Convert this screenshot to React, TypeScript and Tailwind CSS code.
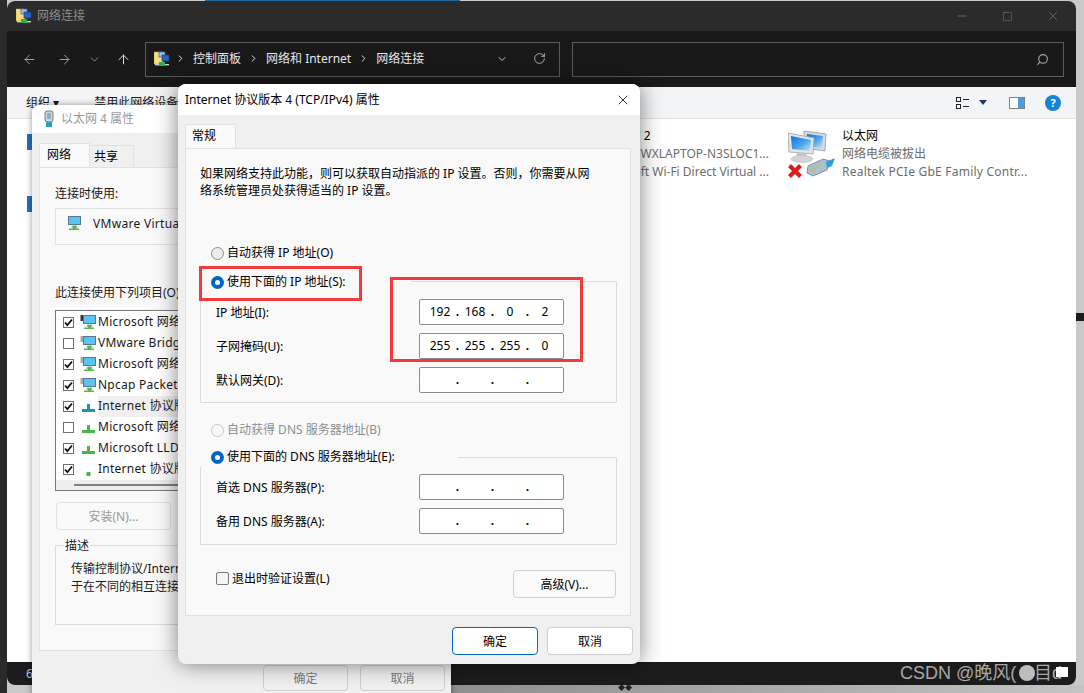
import { ArrowLeft, ArrowRight, ArrowUp, ChevronDown, ChevronRight, RotateCw, Search, Minus, Square, X } from "lucide-react";

const font = "font-['Noto_Sans','Noto_Sans_CJK_SC',sans-serif]";

const FolderNet = () => (
  <svg width="16" height="16" viewBox="0 0 16 16">
    <path d="M0 1h8l1 2v10H0z" fill="#f5dc7c" stroke="#c9a94a" strokeWidth="0.5" />
    <rect x="5" y="1" width="6" height="5" fill="#9cc3ee" stroke="#3c5f96" strokeWidth="0.7" />
    <rect x="8" y="4" width="7" height="6" fill="#2b62c0" stroke="#1f3f7c" strokeWidth="0.7" />
    <rect x="1" y="13" width="14" height="1.4" fill="#d0d0d0" />
    <rect x="5" y="11" width="6" height="4" fill="#2fae4e" />
  </svg>
);

const Monitor = ({ gear, dark }: { gear?: boolean; dark?: boolean }) => (
  <svg width="17" height="17" viewBox="0 0 17 17">
    {gear && <rect x="0.5" y="1" width="5" height="6" fill={dark ? "#333" : "#a9a9a9"} />}
    <rect x="3.5" y="1.5" width="12" height="8" fill="#5cc3f0" stroke="#59788f" />
    <path d="M7 10.5h5l.5 2.5H6.5z" fill="#9db4a5" />
    <path d="M8 11h3v2.5h3v1.5H4v-1.5h4z" fill="#56b84a" />
  </svg>
);

const Stand = ({ teal, small }: { teal?: boolean; small?: boolean }) => (
  <svg width="17" height="17" viewBox="0 0 17 17">
    {small ? (
      <rect x="6.5" y="11" width="4" height="4" fill="#49b649" />
    ) : (
      <path d="M7 6h3v5h5v3H2v-3h5z" fill={teal ? "#2394a8" : "#49b649"} />
    )}
  </svg>
);

const Check = ({ on, className = "" }: { on?: boolean; className?: string }) => (
  <span className={`flex h-[11px] w-[11px] items-center justify-center border border-[#6e6e6e] bg-white ${className}`}>
    {on && (
      <svg width="9" height="9" viewBox="0 0 9 9">
        <path d="M1 4.5l2.4 2.6L8 1.5" fill="none" stroke="#111" strokeWidth="1.8" />
      </svg>
    )}
  </span>
);

const Radio = ({ on, off }: { on?: boolean; off?: boolean }) =>
  on ? (
    <span className="flex h-[13px] w-[13px] shrink-0 items-center justify-center rounded-full bg-[#0067c0]">
      <span className="h-[5px] w-[5px] rounded-full bg-white" />
    </span>
  ) : (
    <span className={`h-[13px] w-[13px] shrink-0 rounded-full border ${off ? "border-[#c6c6c6] bg-[#f9f9f9]" : "border-[#8a8a8a] bg-[#ececec]"}`} />
  );

const IpInput = ({ parts }: { parts: string[] }) => (
  <div className="ml-auto flex h-[26px] w-[145px] items-center rounded-[2px] border border-[#8c8c8c] bg-white pl-[8px] text-[12px] leading-none text-black">
    {parts.map((p, i) => (
      <div key={i} className="flex">
        <span className="w-[24px] text-center">{p}</span>
        {i < 3 && <span className="w-[11px] text-center font-bold">.</span>}
      </div>
    ))}
  </div>
);

const IpRow = ({ label, parts, gap }: { label: string; parts: string[]; gap?: boolean }) => (
  <div className={`flex items-center pl-[15px] pr-[52px] ${gap ? "mt-[8px]" : ""}`}>
    <span>{label}</span>
    <IpInput parts={parts} />
  </div>
);

const DialogBtn = ({ text, primary, w }: { text: string; primary?: boolean; w: string }) => (
  <div className={`flex h-[28px] ${w} items-center justify-center rounded-[4px] border bg-white text-black ${primary ? "border-[#0067c0]" : "border-[#cfcfcf]"}`}>
    {text}
  </div>
);

const listRows = [
  { on: true, text: "Microsoft 网络客户端", icon: <Monitor gear dark /> },
  { on: false, text: "VMware Bridge Protocol", icon: <Monitor gear /> },
  { on: true, text: "Microsoft 网络的文件", icon: <Monitor gear /> },
  { on: true, text: "Npcap Packet Driver", icon: <Monitor gear /> },
  { on: true, text: "Internet 协议版本 4", icon: <Stand teal />, sel: true },
  { on: false, text: "Microsoft 网络适配器", icon: <Stand /> },
  { on: true, text: "Microsoft LLDP 协议", icon: <Stand /> },
  { on: true, text: "Internet 协议版本 6", icon: <Stand small /> },
];

const EthernetIcon = () => (
  <svg width="48" height="50" viewBox="0 0 48 50">
    <defs>
      <linearGradient id="scr" x1="0" y1="0" x2="1" y2="1">
        <stop offset="0" stopColor="#0f6fd8" />
        <stop offset="0.55" stopColor="#4aa6ec" />
        <stop offset="1" stopColor="#c9e8fb" />
      </linearGradient>
    </defs>
    <path d="M16 1l22 3-1 17-21-3z" fill="#d6d9dc" stroke="#a6a9ac" />
    <path d="M19 4l16 2-1 12-15-2z" fill="url(#scr)" />
    <path d="M0 3l26 5-1 16L1 22z" fill="#e2e4e6" stroke="#aeb1b4" />
    <path d="M3 6l20 4-1 11L4 19z" fill="url(#scr)" />
    <path d="M9 23h9l1 4H8z" fill="#c4c6c8" />
    <ellipse cx="14" cy="29" rx="11" ry="3.500" fill="#d2d4d6" stroke="#b4b6b8" strokeWidth="0.5" />
    <path d="M20 36l15-7 7 2-3 9-14 6-6-3z" fill="#aebfcc" stroke="#66808f" strokeWidth="0.8" />
    <path d="M22 39l3 2M25 37.500l3 2M28 36l3 2" stroke="#c9b24a" strokeWidth="1" />
    <path d="M38 32l9-4-3 8-5 2z" fill="#2a9fd8" />
    <path d="M0 37l3-3 4 4 4-4 3 3-4 4 4 4-3 3-4-4-4 4-3-3 4-4z" fill="#dd1c1c" />
  </svg>
);

export default function App() {
  return (
    <div className={`relative h-[693px] w-[1084px] overflow-hidden bg-[#c9c9c9] text-[12px] leading-[17px] text-[#1a1a1a] ${font}`}>
      {/* desktop behind */}
      <div className="absolute left-0 top-0 h-full w-[7px] bg-[#2a2a2a]" />
      <div className="absolute left-[205px] top-0 h-[1px] w-[255px] bg-[#1f6aa5]" />
      <div className="absolute left-[1076px] top-[313px] h-[8px] w-[8px] bg-[#1c1c1c]" />
      <div className="absolute left-[451px] top-[685px] flex h-[8px] w-[633px] justify-start bg-linear-to-r from-[#8f8f8f] to-[#c4c4c4] pl-[167px] text-[7px] leading-[6px] text-[#222]">◆◆</div>

      {/* explorer window */}
      <div className="absolute left-[7px] top-[1px] flex h-[684px] w-[1069px] flex-col overflow-hidden rounded-[8px] bg-white">
        <div className="flex h-[30px] shrink-0 items-center bg-[#2b2b2b] pl-[9px] text-[#8c8c8c]">
          <FolderNet />
          <span className="ml-[5px] -mt-[1px]">网络连接</span>
          <div className="ml-auto flex items-center gap-[33px] pr-[16px] text-[#8c8c8c]">
            <Minus size={14} strokeWidth={1} />
            <Square size={11} strokeWidth={1} />
            <X size={14} strokeWidth={1} />
          </div>
        </div>
        <div className="flex h-[56px] shrink-0 items-center bg-[#191919] pl-[15px] pr-[12px] text-[#e8e8e8]">
          <ArrowLeft size={15} strokeWidth={1.5} className="text-[#a8a8a8]" />
          <ArrowRight size={15} strokeWidth={1.5} className="ml-[20px] text-[#a8a8a8]" />
          <ChevronDown size={13} strokeWidth={1.5} className="ml-[16px] text-[#a8a8a8]" />
          <ArrowUp size={15} strokeWidth={1.5} className="ml-[15px] text-[#e8e8e8]" />
          <div className="ml-[14px] flex h-[35px] w-[415px] items-center border border-[#5a5a5a] pb-[1px] pl-[8px]">
            <FolderNet />
            <ChevronRight size={11} className="ml-[5px]" />
            <span className="ml-[7px] -mt-[1px]">控制面板</span>
            <ChevronRight size={11} className="ml-[7px]" />
            <span className="ml-[7px] -mt-[1px]">网络和 Internet</span>
            <ChevronRight size={11} className="ml-[7px]" />
            <span className="ml-[7px] -mt-[1px]">网络连接</span>
            <ChevronDown size={12} className="ml-[72px] text-[#c8c8c8]" />
            <RotateCw size={13} strokeWidth={1.5} className="ml-[25px] text-[#c8c8c8]" />
          </div>
          <div className="ml-[12px] flex h-[35px] flex-1 items-center justify-end border border-[#5a5a5a] pr-[14px]">
            <Search size={13} strokeWidth={2} className="-scale-x-100 text-[#a8a8a8]" />
          </div>
        </div>
        <div className="flex h-[32px] shrink-0 items-center border-b border-[#e2e2e2] bg-[#f3f4f6] pl-[19px] pr-[15px]">
          <span>组织 ▾</span>
          <span className="ml-[35px]">禁用此网络设备</span>
          <div className="ml-auto flex items-center">
            <svg width="14" height="14" viewBox="0 0 14 14">
              <rect x="0.500" y="1.500" width="4" height="4" fill="none" stroke="#222" />
              <rect x="0.500" y="8.500" width="4" height="4" fill="none" stroke="#222" />
              <path d="M7 3.500h6M7 10.500h6" stroke="#222" />
            </svg>
            <span className="ml-[9px] h-0 w-0 border-x-[4px] border-t-[5px] border-x-transparent border-t-[#1f3a63]" />
            <div className="ml-[22px] flex h-[12px] w-[16px] border border-[#808080] bg-white">
              <span className="ml-auto h-full w-[6px] bg-[#4a9de0]" />
            </div>
            <span className="ml-[20px] flex h-[16px] w-[16px] items-center justify-center rounded-full bg-[#1384d8] text-[11px] font-bold text-white">?</span>
          </div>
        </div>
        <div className="relative flex flex-1 bg-white pl-[579px] pt-[8px]">
          <div className="absolute left-[20px] top-[15px] h-[16px] w-[5px] bg-[#2a6fc0]" />
          <div className="absolute left-[20px] top-[77px] h-[16px] w-[5px] bg-[#2a6fc0]" />
          <div className="w-[183px] whitespace-nowrap leading-[18px] text-[#6d6d6d]">
            <div className="text-black">本地连接* 2</div>
            <div className="text-right">WXLAPTOP-N3SLOC1...</div>
            <div className="text-right">Microsoft Wi-Fi Direct Virtual ...</div>
          </div>
          <div className="ml-[19px] mt-[3px]">
            <EthernetIcon />
          </div>
          <div className="ml-[6px] whitespace-nowrap leading-[18px] text-[#6d6d6d]">
            <div className="text-black">以太网</div>
            <div>网络电缆被拔出</div>
            <div className="tracking-[0.23px]">Realtek PCIe GbE Family Contr...</div>
          </div>
        </div>
        <div className="relative flex h-[23px] shrink-0 items-center bg-[#1c1c1c] pl-[19px] text-[#b8c8e0]">
          <span>6</span>
          <span className="absolute left-[893px] top-0 font-['Liberation_Sans','Noto_Sans_CJK_SC',sans-serif] text-[18px] leading-[23px] text-[#a8a8a8]">CSDN @晚风(</span>
          <span className="absolute left-[1012px] top-[3px] h-[16px] w-[16px] rounded-full bg-[#bdbdbd]" />
          <span className="absolute left-[1027px] top-0 font-['Liberation_Sans','Noto_Sans_CJK_SC',sans-serif] text-[18px] leading-[23px] text-[#a8a8a8]">目d</span>
          <span className="absolute left-[1049px] top-[5px] h-[10px] w-[12px] bg-white" />
        </div>
      </div>

      {/* ethernet 4 properties, behind */}
      <div className="absolute left-[32px] top-[105px] flex h-[600px] w-[419px] flex-col rounded-t-[8px] bg-[#f0f0f0] shadow-[0_0_6px_rgba(0,0,0,0.4)]">
        <div className="flex h-[28px] shrink-0 items-center rounded-t-[8px] bg-white pl-[11px] text-[#9a9a9a]">
          <svg width="12" height="18" viewBox="0 0 12 18">
            <rect x="2" y="1" width="8" height="11" rx="2" fill="#cbd3dc" stroke="#72808e" />
            <path d="M5 3v6M7 3v6" stroke="#72808e" />
            <rect x="3" y="12" width="6" height="5" fill="#2a9fb8" />
          </svg>
          <span className="ml-[6px] -mt-[1px]">以太网 4 属性</span>
        </div>
        <div className="ml-[7px] mt-[11px] flex h-[23px] items-end">
          <div className="flex h-[24px] w-[51px] items-center border border-b-0 border-[#e2e2e2] bg-[#f9f9f9] pb-[2px] pl-[7px] text-black">网络</div>
          <div className="flex h-[22px] w-[44px] items-center border border-b-0 border-l-0 border-[#e2e2e2] bg-[#f0f0f0] pl-[4px] text-black">共享</div>
        </div>
        <div className="ml-[7px] mr-[6px] flex h-[484px] flex-col border border-[#e2e2e2] bg-[#f9f9f9] px-[15px] pt-[17px]">
          <div>连接时使用:</div>
          <div className="mt-[6px] flex h-[37px] w-[370px] items-start border border-[#e2e2e2] pl-[9px] pt-[6px]">
            <Monitor />
            <span className="ml-[11px] whitespace-nowrap tracking-[0.3px]">VMware Virtual Ethernet Adapter</span>
          </div>
          <div className="mt-[39px]">此连接使用下列项目(O):</div>
          <div className="mt-[9px] flex h-[181px] w-[370px] flex-col overflow-hidden border border-[#7a7a7a] bg-white">
            <div className="h-[170px] overflow-hidden pt-[1px]">
              {listRows.map((r) => (
                <div key={r.text} className="relative flex h-[21px] items-center pl-[7px]">
                  <Check on={r.on} />
                  <span className="ml-[6px] flex">{r.icon}</span>
                  <span className={`ml-[1px] h-[21px] whitespace-nowrap leading-[20px] tracking-[0.25px] ${r.sel ? "w-full bg-[#f0f0f0]" : ""}`}>{r.text}</span>
                </div>
              ))}
            </div>
            <div className="flex h-[10px] items-center bg-[#eeeeee] pl-[18px]">
              <span className="h-[2px] w-[200px] bg-[#808080]" />
            </div>
          </div>
          <div className="mt-[11px] flex gap-[12px] pl-[1px]">
            <div className="flex h-[28px] w-[115px] items-center justify-center rounded-[4px] border border-[#e2e2e2] text-[#9a9a9a]">安装(N)...</div>
            <div className="flex h-[28px] w-[115px] items-center justify-center rounded-[4px] border border-[#e2e2e2] text-[#9a9a9a]">卸载(U)</div>
          </div>
          <div className="relative mt-[15px] h-[80px] w-[370px] border border-[#dcdcdc] pl-[15px] pt-[14px] leading-[18px]">
            <span className="absolute -top-[9px] left-[8px] bg-[#f9f9f9] px-[1px]">描述</span>
            <div className="whitespace-nowrap">传输控制协议/Internet 协议。该协议是默认的</div>
            <div className="whitespace-nowrap">于在不同的相互连接的网络上通信。</div>
          </div>
        </div>
        <div className="mt-[14px] flex justify-end gap-[12px] pr-[6px] text-[#7a7a7a]">
          <div className="flex h-[26px] w-[85px] items-center justify-center rounded-[4px] border border-[#d0d0d0]">确定</div>
          <div className="flex h-[26px] w-[85px] items-center justify-center rounded-[4px] border border-[#d0d0d0]">取消</div>
        </div>
      </div>

      {/* ipv4 properties dialog */}
      <div className="absolute left-[178px] top-[84px] flex h-[580px] w-[462px] flex-col rounded-[8px] bg-[#f0f0f0] shadow-[0_0_22px_rgba(0,0,0,0.5)]">
        <div className="flex h-[31px] shrink-0 items-center rounded-t-[8px] bg-white pl-[7px] pr-[9px] text-black">
          <span>Internet 协议版本 4 (TCP/IPv4) 属性</span>
          <X size={16} strokeWidth={1.2} className="ml-auto" />
        </div>
        <div className="ml-[7px] mt-[9px] flex h-[24px] w-[51px] items-center border border-b-0 border-[#e2e2e2] bg-[#f9f9f9] pb-[2px] pl-[6px] text-black">常规</div>
        <div className="ml-[7px] flex h-[468px] w-[446px] flex-col border border-[#e2e2e2] bg-[#f9f9f9] pt-[16px] text-black">
          <div className="pl-[14px] pr-[20px] leading-[17px]">
            如果网络支持此功能，则可以获取自动指派的 IP 设置。否则，你需要从网
            <br />
            络系统管理员处获得适当的 IP 设置。
          </div>
          <div className="ml-[25px] mt-[47px] flex items-center gap-[3px]">
            <Radio />
            <span className="-mt-[2px]">自动获得 IP 地址(O)</span>
          </div>
          <div className="relative ml-[14px] mt-[20px] h-[122px] w-[417px] rounded-[1px] border border-[#dcdcdc]">
            <div className="absolute -left-[1px] -top-[9px] flex h-[19px] w-[211px] items-center gap-[3px] bg-[#f9f9f9] pl-[11px]">
              <Radio on />
              <span className="-mt-[2px]">使用下面的 IP 地址(S):</span>
            </div>
            <div className="pt-[17px]">
              <IpRow label="IP 地址(I):" parts={["192", "168", "0", "2"]} />
              <IpRow label="子网掩码(U):" parts={["255", "255", "255", "0"]} gap />
              <IpRow label="默认网关(D):" parts={["", "", "", ""]} gap />
            </div>
          </div>
          <div className="ml-[25px] mt-[20px] flex items-center gap-[3px] text-[#8e8e8e]">
            <Radio off />
            <span className="-mt-[2px]">自动获得 DNS 服务器地址(B)</span>
          </div>
          <div className="relative ml-[14px] mt-[19px] h-[88px] w-[417px] rounded-[1px] border border-[#dcdcdc]">
            <div className="absolute -left-[1px] -top-[10px] flex h-[19px] w-[258px] items-center gap-[3px] bg-[#f9f9f9] pl-[11px]">
              <Radio on />
              <span className="-mt-[2px]">使用下面的 DNS 服务器地址(E):</span>
            </div>
            <div className="pt-[16px]">
              <IpRow label="首选 DNS 服务器(P):" parts={["", "", "", ""]} />
              <IpRow label="备用 DNS 服务器(A):" parts={["", "", "", ""]} gap />
            </div>
          </div>
          <div className="ml-[30px] mr-[14px] mt-[25px] flex items-start">
            <span className="mt-[2px] h-[13px] w-[13px] rounded-[2px] border border-[#7a7a7a] bg-[#f5f5f5]" />
            <span className="ml-[3px]">退出时验证设置(L)</span>
            <div className="ml-auto flex h-[28px] w-[103px] items-center justify-center rounded-[4px] border border-[#d0d0d0] bg-[#fbfbfb]">高级(V)...</div>
          </div>
        </div>
        <div className="mt-[11px] flex justify-end gap-[9px] pr-[7px]">
          <DialogBtn text="确定" primary w="w-[86px]" />
          <DialogBtn text="取消" w="w-[86px]" />
        </div>
      </div>

      {/* annotation boxes */}
      <div className="absolute left-[199px] top-[266px] h-[35px] w-[163px] border-[3px] border-[#f33a3a]" />
      <div className="absolute left-[390px] top-[277px] h-[85px] w-[193px] border-[3px] border-[#f33a3a]" />
    </div>
  );
}
